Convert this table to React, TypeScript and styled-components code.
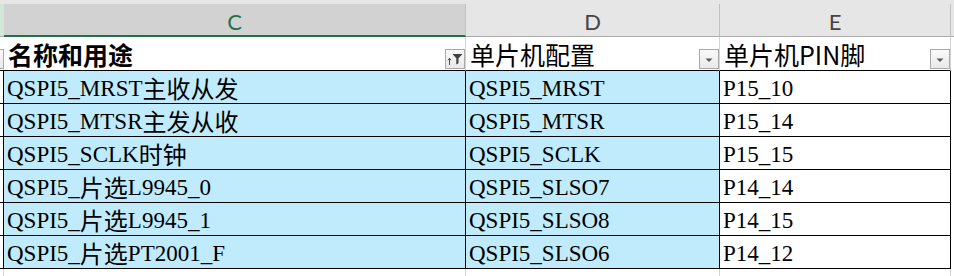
import React from 'react';
import styled, { createGlobalStyle } from 'styled-components';

const GlobalStyle = createGlobalStyle`
  html, body {
    margin: 0;
    padding: 0;
    background: #fff;
  }
`;

// gutter | C | D | E | right edge
const COLS = '4px 462px 254px 231px 3px';
const FILL = '#bfebfd';
const GRID = '#d4d4d4';

const Sheet = styled.div`
  width: 954px;
  height: 276px;
  overflow: hidden;
  background: #fff;
  display: flex;
  flex-direction: column;
`;

const TopBand = styled.div`
  flex: none;
  height: 4px;
  background: #e6e6e6;
`;

const Row = styled.div<{ $h: number }>`
  flex: none;
  display: grid;
  grid-template-columns: ${COLS};
  height: ${(p) => p.$h}px;
`;

const ColHead = styled.div<{ $selected?: boolean }>`
  box-sizing: border-box;
  display: flex;
  align-items: center;
  justify-content: center;
  padding-top: 3px;
  background: ${(p) => (p.$selected ? '#d2d2d2' : '#e6e6e6')};
  border-right: 1px solid #c0c0c0;
  border-bottom: ${(p) => (p.$selected ? '2px solid #217346' : '1px solid #ababab')};
  color: ${(p) => (p.$selected ? '#217346' : '#444')};
  font-family: Lato, 'Liberation Sans', sans-serif;
  font-size: 22px;
`;

const HeadGutter = styled.div`
  box-sizing: border-box;
  background: #d3e7d9;
  border-bottom: 1px solid #ababab;
`;

const HeadEdge = styled.div`
  box-sizing: border-box;
  background: #e6e6e6;
  border-bottom: 1px solid #ababab;
`;

const TitleCell = styled.div`
  box-sizing: border-box;
  display: flex;
  align-items: center;
  justify-content: space-between;
  padding-left: 4px;
  background: #fff;
  border-right: 1px solid ${GRID};
  border-bottom: 1px solid #000;
  font-family: 'Noto Sans CJK SC', sans-serif;
  font-size: 25px;
  line-height: 1;
  color: #000;
  white-space: nowrap;
`;

const TitleText = styled.span<{ $bold?: boolean }>`
  font-weight: ${(p) => (p.$bold ? 700 : 400)};
  padding-top: 2px;
`;

const TitleGutter = styled.div`
  box-sizing: border-box;
  display: flex;
  justify-content: flex-end;
  overflow: hidden;
  border-bottom: 1px solid #000;
`;

const FilterButton = styled.div`
  flex: none;
  box-sizing: border-box;
  align-self: flex-end;
  width: 20px;
  height: 20px;
  margin-bottom: 1px;
  border: 1px solid #a9a9a9;
  background: linear-gradient(#fafafa, #e9e9e9);
  display: flex;
  align-items: center;
  justify-content: center;
`;

const DataGutter = styled.div`
  box-sizing: border-box;
  background: #fff;
  border-right: 1px solid #000;
  border-bottom: 1px solid #000;
`;

const DataCell = styled.div<{ $fill?: boolean }>`
  box-sizing: border-box;
  display: flex;
  align-items: center;
  padding-left: 3px;
  padding-top: 2px;
  background: ${(p) => (p.$fill ? FILL : '#fff')};
  border-right: 1px solid #000;
  border-bottom: 1px solid #000;
  font-family: 'Liberation Serif', 'Noto Sans CJK SC', serif;
  font-size: 23px;
  line-height: 1;
  color: #000;
  white-space: nowrap;
  overflow: hidden;
`;

const Cjk = styled.span`
  font-family: 'Noto Sans CJK SC', sans-serif;
  font-size: 24px;
`;

const EmptyCell = styled.div<{ $line?: boolean }>`
  box-sizing: border-box;
  border-right: ${(p) => (p.$line ? `1px solid ${GRID}` : 'none')};
`;

const SortedFilterIcon = () => (
  <svg width="18" height="18" viewBox="0 0 18 18">
    <path d="M3.5 15V8.5M2 10.3l1.5-2 1.5 2" stroke="#505050" strokeWidth="1" fill="none" />
    <path d="M6.5 4h10l-4 4.3v5l-2.2 1.2V8.3z" fill="#404040" />
  </svg>
);

const DropIcon = () => (
  <svg width="18" height="18" viewBox="0 0 18 18">
    <path d="M5.5 8.5h7L9 12z" fill="#5a5a5a" />
  </svg>
);

const rows = [
  ['QSPI5_MRST主收从发', 'QSPI5_MRST', 'P15_10'],
  ['QSPI5_MTSR主发从收', 'QSPI5_MTSR', 'P15_14'],
  ['QSPI5_SCLK时钟', 'QSPI5_SCLK', 'P15_15'],
  ['QSPI5_片选L9945_0', 'QSPI5_SLSO7', 'P14_14'],
  ['QSPI5_片选L9945_1', 'QSPI5_SLSO8', 'P14_15'],
  ['QSPI5_片选PT2001_F', 'QSPI5_SLSO6', 'P14_12'],
];

// Chinese runs are set in the CJK face, the rest in the serif
const MixedText: React.FC<{ text: string }> = ({ text }) => (
  <>
    {text.split(/([\u4e00-\u9fff]+)/).map((part, i) =>
      /[\u4e00-\u9fff]/.test(part) ? <Cjk key={i}>{part}</Cjk> : <span key={i}>{part}</span>
    )}
  </>
);

export default function App() {
  return (
    <Sheet>
      <GlobalStyle />
      <TopBand />
      <Row $h={33}>
        <HeadGutter />
        <ColHead $selected>C</ColHead>
        <ColHead>D</ColHead>
        <ColHead>E</ColHead>
        <HeadEdge />
      </Row>
      <Row $h={34}>
        <TitleGutter>
          <FilterButton />
        </TitleGutter>
        <TitleCell>
          <TitleText $bold>名称和用途</TitleText>
          <FilterButton>
            <SortedFilterIcon />
          </FilterButton>
        </TitleCell>
        <TitleCell>
          <TitleText>单片机配置</TitleText>
          <FilterButton>
            <DropIcon />
          </FilterButton>
        </TitleCell>
        <TitleCell>
          <TitleText>单片机PIN脚</TitleText>
          <FilterButton>
            <DropIcon />
          </FilterButton>
        </TitleCell>
        <EmptyCell />
      </Row>
      {rows.map((r) => (
        <Row $h={33} key={r[0]}>
          <DataGutter />
          <DataCell $fill>
            <MixedText text={r[0]} />
          </DataCell>
          <DataCell $fill>{r[1]}</DataCell>
          <DataCell>{r[2]}</DataCell>
          <EmptyCell />
        </Row>
      ))}
      <Row $h={10}>
        <EmptyCell $line />
        <EmptyCell $line />
        <EmptyCell $line />
        <EmptyCell $line />
        <EmptyCell />
      </Row>
    </Sheet>
  );
}
